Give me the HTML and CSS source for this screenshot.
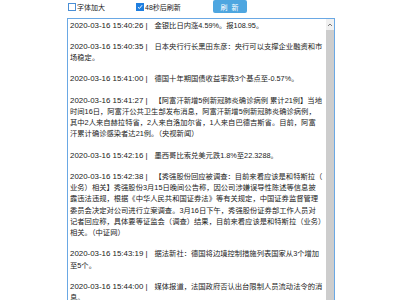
FILE: index.html
```html
<!DOCTYPE html>
<html lang="zh-CN">

<head>
    <meta charset="UTF-8">
    <meta name="viewport" content="width=device-width, initial-scale=1.0">
    <link rel="stylesheet" href="styles.css">
    <title>快讯</title>
</head>

<body>
    <div class="page">
        <div class="toolbar">
            <label class="opt"><span class="box"></span>字体加大</label>
            <label class="opt opt-refresh"><span class="box checked"><svg viewBox="0 0 8 8" width="8" height="8"><path d="M1.3 4.2 L3.2 6 L6.8 1.6" fill="none" stroke="#fff" stroke-width="1.3"/></svg></span>48秒后刷新</label>
            <button class="refresh">刷 新</button>
        </div>
        <div class="panel">
            <div class="feed">
                <p><span class="time">2020-03-16 15:40:26 |</span>金银比日内涨4.59%。报108.95。</p>
                <p><span class="time">2020-03-16 15:40:35 |</span>日本央行行长黑田东彦：央行可以支撑企业融资和市场稳定。</p>
                <p><span class="time">2020-03-16 15:41:00 |</span>德国十年期国债收益率跌3个基点至-0.57%。</p>
                <p><span class="time">2020-03-16 15:41:27 |</span>【阿富汗新增5例新冠肺炎确诊病例 累计21例】当地时间16日，阿富汗公共卫生部发布消息，阿富汗新增5例新冠肺炎确诊病例，其中2人来自赫拉特省，2人来自洛加尔省，1人来自巴德吉斯省。目前，阿富汗累计确诊感染者达21例。（央视新闻）</p>
                <p><span class="time">2020-03-16 15:42:16 |</span>墨西哥比索兑美元跌1.8%至22.3288。</p>
                <p><span class="time">2020-03-16 15:42:38 |</span>【秀强股份回应被调查：目前来看应该是和特斯拉（业务）相关】秀强股份3月15日晚间公告称，因公司涉嫌误导性陈述等信息披露违法违规，根据《中华人民共和国证券法》等有关规定，中国证券监督管理委员会决定对公司进行立案调查。3月16日下午，秀强股份证券部工作人员对记者回应称，具体要等证监会（调查）结果，目前来看应该是和特斯拉（业务）相关。（中证网）</p>
                <p><span class="time">2020-03-16 15:43:19 |</span>据法新社：德国将边境控制措施列表国家从3个增加至5个。</p>
                <p><span class="time">2020-03-16 15:44:00 |</span>媒体报道，法国政府否认出台限制人员流动法令的消息。</p>
            </div>
            <div class="scrollbar">
                <div class="arrow"><svg viewBox="0 0 8 6" width="8" height="6"><path d="M2 4 L4 2 L6 4" fill="none" stroke="#7a7a7a" stroke-width="1"/></svg></div>
                <div class="thumb"></div>
            </div>
        </div>
    </div>
</body>

</html>
```

FILE: styles.css
```css
* {
    margin: 0;
    padding: 0;
    box-sizing: border-box;
}

body {
    background-color: #fff;
    font-family: "Liberation Sans", "Noto Sans CJK SC", sans-serif;
    color: #222;
}

.page {
    width: 268px;
    margin-left: 67px;
}

.toolbar {
    display: flex;
    align-items: center;
    height: 14px;
    margin-bottom: 4px;
    padding-left: 1px;
    font-size: 7px;
}

.opt {
    display: flex;
    align-items: center;
    width: 68px;
}

.opt-refresh {
    width: 77px;
}

.box {
    display: flex;
    align-items: center;
    justify-content: center;
    width: 8px;
    height: 8px;
    margin-right: 1px;
    border: 1px solid #4a8fd6;
    background-color: #fff;
}

.box.checked {
    background-color: #1f7fe0;
    border-color: #1f7fe0;
}

.refresh {
    width: 34px;
    height: 13px;
    margin-top: -1px;
    border: none;
    border-radius: 2px;
    background-color: #4ea6e0;
    color: #fff;
    font-family: inherit;
    font-size: 7px;
    letter-spacing: 1px;
}

.panel {
    display: flex;
    height: 290px;
    border: 1px solid #6aa8e4;
    border-bottom: none;
    overflow: hidden;
}

.feed {
    flex: 1;
    padding: 1px 3.55px 0 2px;
    font-size: 7.3px;
    line-height: 11.3px;
    line-break: anywhere;
}

.feed p {
    margin-bottom: 9.8px;
}

.time {
    font-size: 7.9px;
    margin-right: 7px;
}

.scrollbar {
    width: 8px;
    display: flex;
    flex-direction: column;
    background-color: #f0f0f0;
}

.arrow {
    height: 11px;
    display: flex;
    align-items: center;
    justify-content: center;
}

.thumb {
    flex: 1;
    background-color: #cdcdcd;
}
```
